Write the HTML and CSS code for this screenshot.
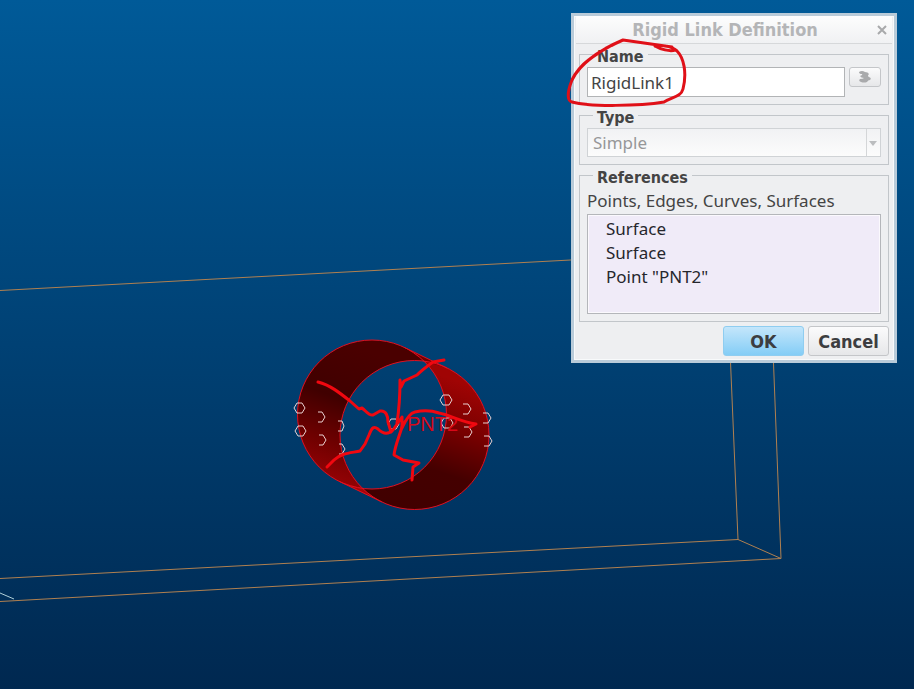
FILE: index.html
```
<!DOCTYPE html>
<html lang="en">
<head>
  <meta charset="UTF-8">
  <meta name="viewport" content="width=device-width, initial-scale=1.0">
  <title>Rigid Link Definition</title>
  <link rel="stylesheet" href="styles.css">
</head>
<body>
  <div class="viewport">
    <!-- model view -->
    <svg class="model" viewBox="0 0 914 689" preserveAspectRatio="xMaxYMin slice">
      <defs>
        <linearGradient id="shade-left" x1="0.3" y1="0" x2="0" y2="1">
          <stop offset="0" stop-color="#4a0000"/>
          <stop offset="0.35" stop-color="#400000"/>
          <stop offset="0.65" stop-color="#700000"/>
          <stop offset="1" stop-color="#a80408"/>
        </linearGradient>
        <linearGradient id="shade-right" x1="0.3" y1="0" x2="0" y2="1">
          <stop offset="0" stop-color="#a00404"/>
          <stop offset="0.3" stop-color="#780000"/>
          <stop offset="0.6" stop-color="#440000"/>
          <stop offset="1" stop-color="#400000"/>
        </linearGradient>
      </defs>

      <!-- plate edges -->
      <g class="edges">
        <path d="M0 290.500L580 259.500"/>
        <path d="M0 578.500L738 539.500L730 350"/>
        <path d="M0 601.500L781 558.500L773 350"/>
        <path d="M738 539.500L781 558.500"/>
        <path class="edge-light" d="M0 593L14 599"/>
      </g>

      <!-- hole surfaces -->
      <g class="hole">
        <path fill="url(#shade-left)" d="M423.900 361.100A74.500 74.500 0 1 0 362.600 488.400A74.500 74.500 0 0 1 423.900 361.100Z"/>
        <path fill="#a80408" d="M339.300 481.400L381.800 501.900L362.600 488.400Z"/>
        <path fill="url(#shade-right)" d="M423.900 361.100A74.500 74.500 0 1 1 362.600 488.400A74.500 74.500 0 0 0 423.900 361.100Z"/>
        <path fill="#700000" d="M404.700 347.600L447.200 368.100L423.900 361.100Z"/>
        <circle cx="372" cy="414.500" r="74.500"/>
        <circle cx="414.500" cy="435" r="74.500"/>
        <path d="M404.700 347.600L447.200 368.100M339.300 481.400L381.800 501.900"/>
      </g>

      <!-- nodes -->
      <g class="nodes">
        <path d="M297 403h5l3 5l-3 5h-5l-3-5z"/>
        <path d="M298 426h5l3 5l-3 5h-5l-3-5z"/>
        <path d="M318 412h4l3 5l-3 5h-4"/>
        <path d="M319 435h4l3 5l-3 5h-4"/>
        <path d="M338 421h4l2 5l-2 5h-4"/>
        <path d="M339 444h3l3 5l-3 5h-3"/>
        <path d="M443 395h6l3 5l-3 5h-6l-3-5z"/>
        <path d="M444 418h6l3 5l-3 5h-6l-3-5z"/>
        <path d="M463 404h5l3 5l-3 5h-5"/>
        <path d="M464 427h5l3 5l-3 5h-5"/>
        <path d="M483 413h5l3 5l-3 5h-5"/>
        <path d="M484 436h5l3 5l-3 5h-5"/>
        <path d="M391 419h5l3 5l-3 5h-5l-3-5z"/>
      </g>
      <text class="point-name" x="407" y="431">PNT2</text>

      <!-- link sketch -->
      <g class="pen">
        <path d="M318 382C330 385 340 393 350 401L359 409L362 408C366 411 369 416 373 415L380 411C386 410 388 416 388 422L391 432"/>
        <path d="M444 360L433 362C426 367 421 371 417 375L404 381L401 387L400 380C400 398 399 410 397 423"/>
        <path d="M327 467L334 460C341 453 351 453 360 451L365 444L369 435C372 427 374 426 378 429C383 434 388 435 393 430L402 417L402 428C406 419 410 413 415 412C424 410 433 411 439 413C450 415 461 422 476 424L470 427"/>
        <path d="M402 427C399 437 395 446 394 455L403 460L419 463L413 467L412 480"/>
      </g>
    </svg>

    <form class="dialog">
      <div class="title-bar">
        <h1>Rigid Link Definition</h1>
        <button type="button" class="close" aria-label="Close">
          <svg width="10" height="10" viewBox="0 0 10 10"><path d="M1 1L9 9M9 1L1 9"/></svg>
        </button>
      </div>

      <div class="content">
        <fieldset>
          <legend><label for="name">Name</label></legend>
          <div class="name-row">
            <input type="text" id="name" value="RigidLink1">
            <button type="button" class="btn props" aria-label="Properties">
              <svg width="14" height="12" viewBox="0 0 14 12"><path d="M1 1Q4 -1 7 1Q10 1 11 3Q9 5 11 6Q14 7 12 9Q10 9 9 11Q6 12 3 11Q0 10 2 8Q5 8 6 7Q3 7 2 5Q5 4 4 3Q1 3 1 1Z"/></svg>
            </button>
          </div>
        </fieldset>

        <fieldset>
          <legend><label for="type">Type</label></legend>
          <div class="select-box">
            <select id="type" disabled>
              <option>Simple</option>
            </select>
          </div>
        </fieldset>

        <fieldset>
          <legend>References</legend>
          <div class="list-label" id="refs-label">Points, Edges, Curves, Surfaces</div>
          <ul class="ref-list" aria-labelledby="refs-label">
            <li>Surface</li>
            <li>Surface</li>
            <li>Point "PNT2"</li>
          </ul>
        </fieldset>

        <div class="buttons">
          <button type="submit" class="btn ok">OK</button>
          <button type="button" class="btn">Cancel</button>
        </div>
      </div>

      <!-- pen mark around the name -->
      <svg class="mark" width="124" height="74" viewBox="565 36 124 74">
        <path d="M675 50C670 52 660 49 655 46M672 47L623 40C602 49 580 63 572 80C566 95 568 101 572 102C590 107 640 106 664 102C672 97 681 97 683 89C687 73 684 58 677 51C670 45 660 45 655 46"/>
      </svg>
    </form>
  </div>
</body>
</html>
```
FILE: styles.css
```
body {
  margin: 0;
  font-family: 'Noto Sans', sans-serif;
  font-size: 17px;
  color: #444;
}
.viewport {
  position: relative;
  height: 100vh;
  overflow: hidden;
  background: linear-gradient(#005a98, #002850);
}
.model {
  display: block;
  width: 100%;
  height: 100%;
}
.edges path {
  fill: none;
  stroke: #b08050;
  stroke-width: 1;
}
.edges .edge-light {
  stroke: #b0d0d8;
}
.hole circle,
.hole path:last-child {
  fill: none;
  stroke: #e01020;
  stroke-width: 1;
}
.nodes path {
  fill: none;
  stroke: #e8d0d0;
  stroke-width: 1;
}
.point-name {
  font-family: 'Liberation Sans', sans-serif;
  font-size: 20px;
  fill: #d80818;
}
.pen path,
.mark path {
  fill: none;
  stroke: #f00810;
  stroke-width: 3;
  stroke-linecap: round;
  stroke-linejoin: round;
}
.mark path {
  stroke: #e01018;
}

/* dialog */
.dialog {
  position: absolute;
  top: 13px;
  right: 17px;
  width: 326px;
  box-sizing: border-box;
  border: 3px solid #b9cbd9;
  background: #eeeff1;
  box-shadow: inset 0 0 0 1px #f8fafb;
}
.title-bar {
  display: flex;
  align-items: center;
  height: 27px;
  margin: 0 2px;
  border-bottom: 1px solid #d6d8da;
  background: linear-gradient(#fdfdfd, #f0f1f3);
}
.title-bar h1 {
  flex: 1;
  margin: 0;
  padding-left: 2px;
  font-family: 'DejaVu Sans Condensed', 'DejaVu Sans', sans-serif;
  font-size: 18px;
  text-align: center;
  color: #b4b5b7;
}
.close {
  width: 20px;
  padding: 0;
  border: 0;
  background: none;
  line-height: 0;
}
.close path {
  stroke: #a8a9ab;
  stroke-width: 2;
}
.content {
  padding: 0 5px 4px;
}
fieldset {
  margin: 0;
  padding: 2px 7px 7px;
  border: 1px solid #c2c6ca;
}
legend {
  margin-left: 6px;
  padding: 5px 4px 0;
  font-family: 'DejaVu Sans Condensed', 'DejaVu Sans', sans-serif;
  font-size: 16px;
  line-height: 16px;
  font-weight: bold;
}
.name-row {
  display: flex;
  align-items: flex-start;
  gap: 4px;
}
input {
  flex: 1;
  min-width: 0;
  height: 30px;
  box-sizing: border-box;
  padding: 0 3px;
  border: 1px solid #b2b4b6;
  background: #fff;
  font: inherit;
  color: #444;
}
.btn {
  box-sizing: border-box;
  border: 1px solid #c4c6c9;
  border-radius: 3px;
  background: linear-gradient(#fbfbfc, #e6e7e9);
  font-family: 'DejaVu Sans Condensed', 'DejaVu Sans', sans-serif;
  font-size: 18px;
  font-weight: bold;
  color: #3c3d40;
}
.props {
  width: 32px;
  height: 20px;
  padding: 0;
  line-height: 0;
}
.props path {
  fill: #a9aaac;
}
.select-box {
  position: relative;
}
.select-box::before {
  content: "";
  position: absolute;
  top: 1px;
  bottom: 1px;
  right: 14px;
  border-left: 1px solid #d4d6d8;
}
.select-box::after {
  content: "";
  position: absolute;
  top: 13px;
  right: 4px;
  border: 4px solid transparent;
  border-top: 5px solid #bbbdbf;
  border-bottom: 0;
}
select {
  display: block;
  width: 100%;
  height: 29px;
  padding: 0 5px;
  border: 1px solid #d0d3d6;
  background: linear-gradient(#f1f2f4, #fcfcfc);
  appearance: none;
  font: inherit;
  color: #969799;
}
select:disabled {
  opacity: 1;
}
.list-label {
  line-height: 26px;
}
.ref-list {
  height: 100px;
  box-sizing: border-box;
  margin: 0;
  padding: 2px 18px;
  border: 1px solid #b4b6ba;
  box-shadow: inset 0 0 0 1px #fbf9fd;
  background: #f0ebf8;
  list-style: none;
  line-height: 24px;
  color: #25262c;
}
.buttons {
  display: flex;
  justify-content: flex-end;
  gap: 4px;
  margin-top: 4px;
}
.buttons .btn {
  width: 81px;
  height: 30px;
  padding: 0;
}
.buttons .ok {
  border-color: #8fcdf0;
  background: linear-gradient(#c4e6fb, #84cdf6);
}
.mark {
  position: absolute;
  top: 20px;
  left: -9px;
}
```
